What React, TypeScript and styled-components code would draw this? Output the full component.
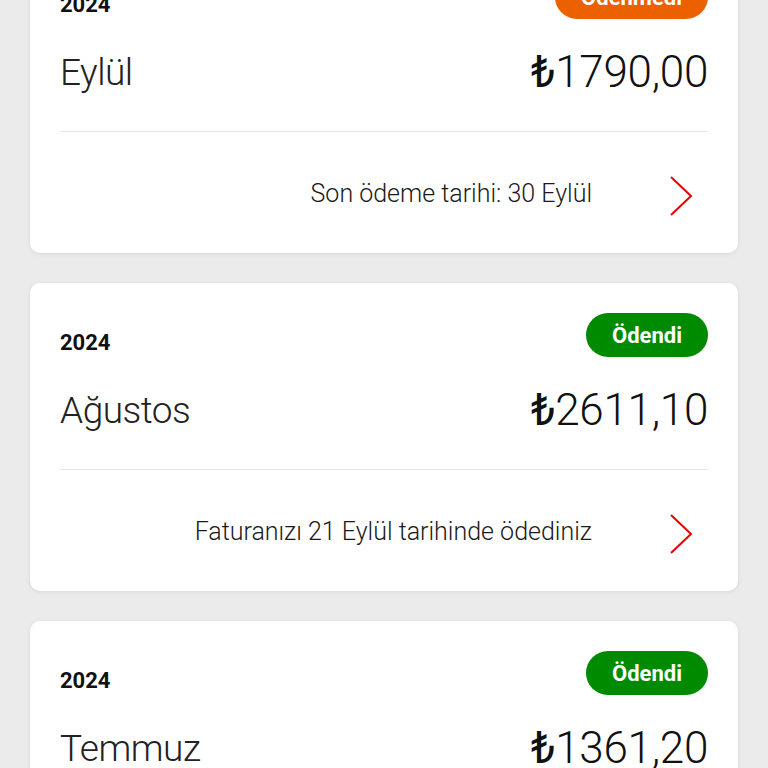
import styled, { createGlobalStyle } from 'styled-components';

const GlobalStyle = createGlobalStyle`
  html, body {
    margin: 0;
    padding: 0;
    background: #ebebeb;
    font-family: Roboto, "Noto Sans", Arial, sans-serif;
    color: #222;
    overflow: hidden;
  }
`;

const List = styled.div`
  display: flex;
  flex-direction: column;
  gap: 30px;
  padding: 0 30px;
  margin-top: -55px;
`;

const Card = styled.div`
  background: #fff;
  border-radius: 10px;
  box-shadow: 0 1px 5px rgba(0, 0, 0, 0.08);
  padding: 30px 30px 0;
`;

const TopRow = styled.div`
  display: flex;
  justify-content: space-between;
  align-items: flex-end;
  height: 44px;
`;

const Year = styled.span`
  font-size: 22px;
  font-weight: 700;
  line-height: 1;
  margin-bottom: 3px;
  color: #111;
`;

const Badge = styled.span<{ $paid: boolean }>`
  display: inline-flex;
  align-items: center;
  justify-content: center;
  height: 44px;
  padding: 0 26px;
  border-radius: 22px;
  background: ${(p) => (p.$paid ? '#008a00' : '#eb6100')};
  color: #fff;
  font-size: 22px;
  font-weight: 700;
`;

const MainRow = styled.div`
  display: flex;
  justify-content: space-between;
  align-items: center;
  height: 74px;
  margin-top: 16px;
`;

const Month = styled.span`
  font-size: 37px;
  font-weight: 300;
  color: #222;
  letter-spacing: -0.5px;
`;

const Amount = styled.span`
  font-size: 44px;
  font-weight: 300;
  color: #111;
  letter-spacing: -0.3px;
`;

const Lira = styled.span`
  font-weight: 400;
`;

const Divider = styled.div`
  height: 1px;
  background: #e6e6e6;
  margin-top: 22px;
`;

const Footer = styled.div`
  display: flex;
  justify-content: flex-end;
  align-items: center;
  gap: 77px;
  padding: 44px 15px 37px 0;
`;

const FooterText = styled.span`
  font-size: 25px;
  font-weight: 300;
  color: #1a1a1a;
  margin-top: -6px;
`;

const Chevron = styled.svg`
  display: block;
  width: 24px;
  height: 40px;
`;

type Bill = {
  year: string;
  month: string;
  amount: string;
  paid: boolean;
  note: string;
};

const bills: Bill[] = [
  { year: '2024', month: 'Eylül', amount: '1790,00', paid: false, note: 'Son ödeme tarihi: 30 Eylül' },
  { year: '2024', month: 'Ağustos', amount: '2611,10', paid: true, note: 'Faturanızı 21 Eylül tarihinde ödediniz' },
  { year: '2024', month: 'Temmuz', amount: '1361,20', paid: true, note: 'Faturanızı 20 Ağustos tarihinde ödediniz' },
];

const App: React.FC = () => {
  return (
    <>
      <GlobalStyle />
      <List>
        {bills.map((b) => (
          <Card key={b.month}>
            <TopRow>
              <Year>{b.year}</Year>
              <Badge $paid={b.paid}>{b.paid ? 'Ödendi' : 'Ödenmedi'}</Badge>
            </TopRow>
            <MainRow>
              <Month>{b.month}</Month>
              <Amount>
                <Lira>₺</Lira>
                {b.amount}
              </Amount>
            </MainRow>
            <Divider />
            <Footer>
              <FooterText>{b.note}</FooterText>
              <Chevron viewBox="0 0 24 40">
                <path d="M2 1 L22 20 L2 39" fill="none" stroke="#e60000" strokeWidth="2" />
              </Chevron>
            </Footer>
          </Card>
        ))}
      </List>
    </>
  );
};

export default App;
